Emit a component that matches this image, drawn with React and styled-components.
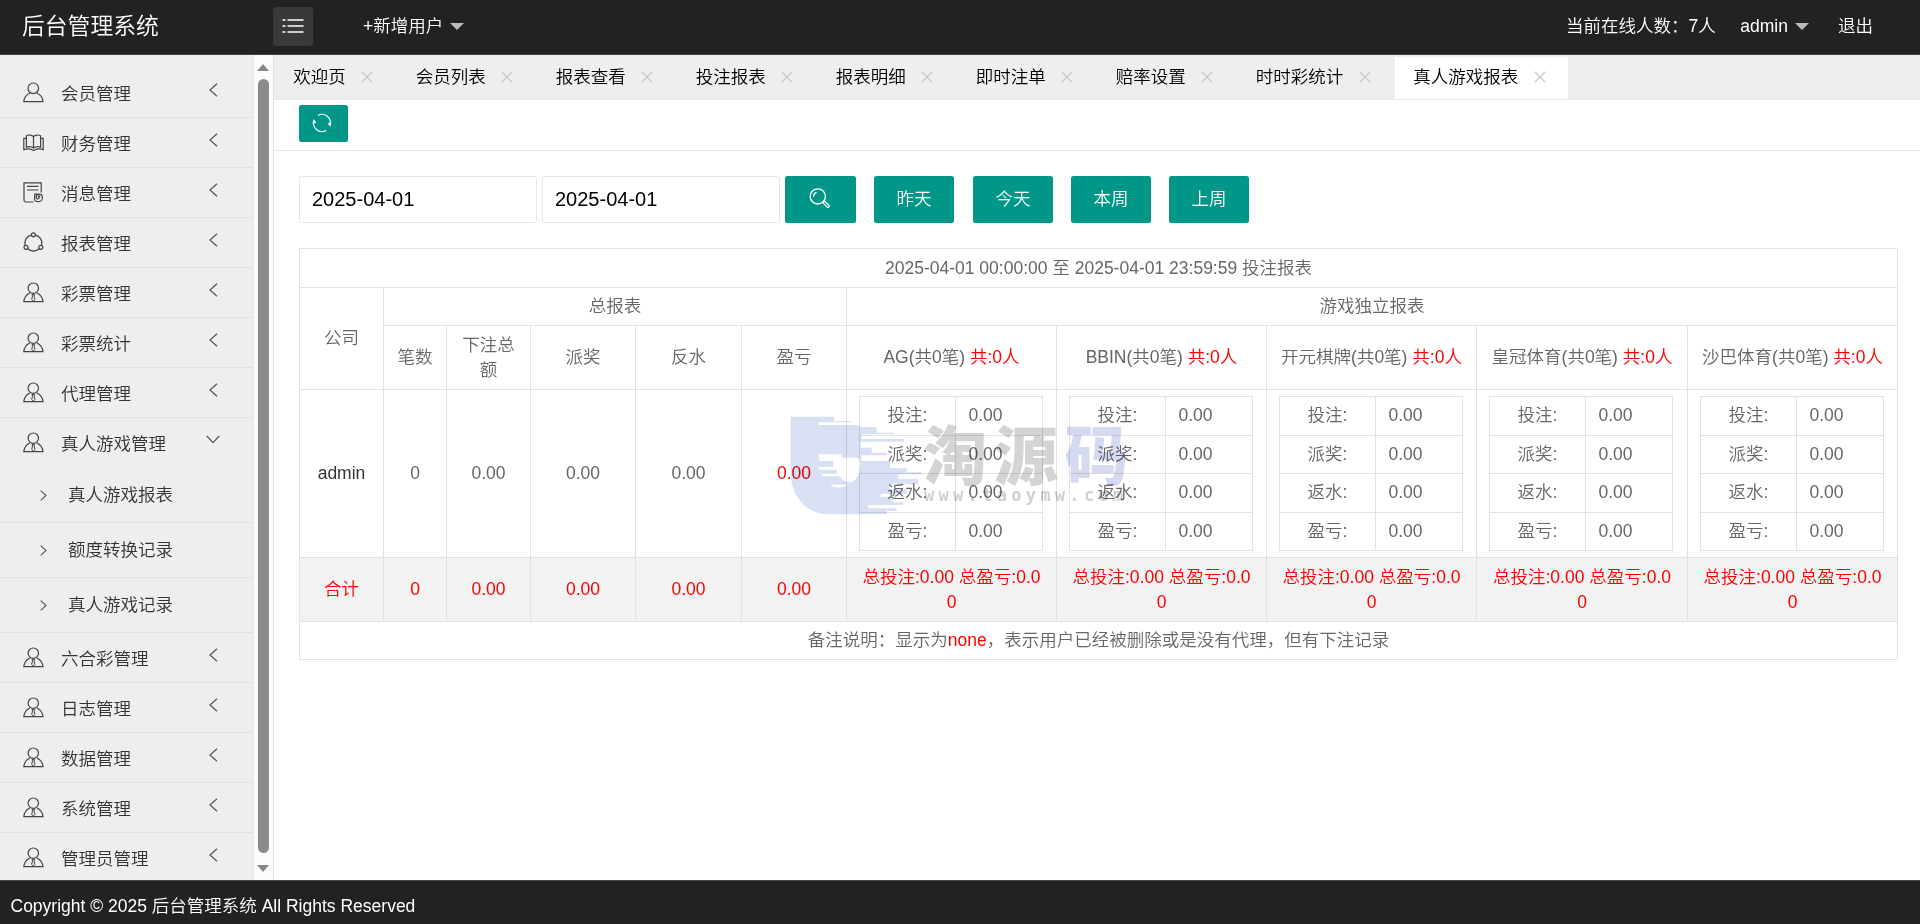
import styled, { createGlobalStyle, css } from "styled-components";

const GlobalStyle = createGlobalStyle`
  * {
    box-sizing: border-box;
  }

  body {
    margin: 0;
    overflow: hidden;
    background: #fff;
    color: #333;
    font: 17.5px/25px "Liberation Sans", "Noto Sans CJK SC", sans-serif;
    font-weight: 350;
  }

  ul {
    margin: 0;
    padding: 0;
    list-style: none;
  }
`;

const Page = styled.div`
  display: flex;
  flex-direction: column;
  width: 1920px;
  height: 924px;
`;

/* ---------- header ---------- */

const Header = styled.header`
  display: flex;
  align-items: center;
  flex: none;
  height: 55px;
  padding: 0 47px 2px 22px;
  border-bottom: 1px solid #444;
  background: #222;
  color: #fff;
`;

const Logo = styled.h1`
  width: 251px;
  margin: 0;
  font-size: 22.8px;
  font-weight: 350;
  line-height: 50px;
`;

const MenuToggle = styled.button`
  display: flex;
  align-items: center;
  justify-content: center;
  width: 40px;
  height: 39px;
  margin: 1px 50px 0 0;
  padding: 0 0 1px;
  border: 0;
  border-radius: 3px;
  background: #393939;
`;

const HeaderLink = styled.span`
  display: flex;
  align-items: center;
  gap: ${(p) => p.$gap || 7}px;
  margin-right: ${(p) => p.$right || 0}px;
  white-space: nowrap;
`;

const Caret = styled.i`
  border: 7px solid transparent;
  border-top-color: #bbb;
  border-bottom: 0;
`;

const Spacer = styled.div`
  flex: 1;
`;

/* ---------- sidebar ---------- */

const Body = styled.div`
  display: flex;
  flex: none;
  height: 825px;
`;

const Sidebar = styled.nav`
  width: 254px;
  height: 825px;
  padding-top: 13px;
  overflow: hidden;
  border-right: 1px solid #e5e5e5;
  background: #eee;
`;

const NavItem = styled.div`
  display: flex;
  align-items: center;
  height: 50px;
  padding: 0 35px 0 22.5px;
  border-bottom: 1px solid ${(p) => (p.$open ? "transparent" : "#e1e1e1")};

  svg {
    flex: none;
  }
`;

const NavText = styled.span`
  flex: 1;
  padding: 3px 0 0 17.5px;
`;

const ArrowBox = styled.span`
  display: flex;
  justify-content: center;
  width: 18px;
  margin: 0 -4px 6px 0;
`;

const SubItem = styled.li`
  display: flex;
  align-items: center;
  gap: 21px;
  height: 55px;
  padding: 0 0 0 40px;
  border-bottom: 1px solid #e1e1e1;
`;

const ScrollBar = styled.div`
  display: flex;
  flex-direction: column;
  align-items: center;
  width: 20px;
  padding: 9px 1px 8px 0;
  border-right: 1px solid #e2e2e2;
  background: #fcfcfc;
`;

const ScrollArrow = styled.i`
  border: 6.5px solid transparent;
  ${(p) =>
    p.$down
      ? css`
          border-top: 7px solid #888;
          border-bottom: 0;
        `
      : css`
          border-bottom: 7px solid #888;
          border-top: 0;
        `}
`;

const ScrollThumb = styled.div`
  flex: 1;
  width: 11px;
  margin: 8px 0 12px;
  border-radius: 6px;
  background: #8b8b8b;
`;

/* ---------- content ---------- */

const Content = styled.main`
  position: relative;
  flex: 1;
  min-width: 0;
`;

const TabBar = styled.ul`
  display: flex;
  height: 45px;
  padding: 2px 0 0 0.5px;
  border-bottom: 1px solid #e8e8ea;
  background: #eeeef0;
`;

const Tab = styled.li`
  display: flex;
  align-items: center;
  gap: 15.5px;
  height: 42px;
  padding: 0 ${(p) => (p.$active ? 22 : 23.75)}px 2px 18.75px;
  background: ${(p) => (p.$active ? "#fff" : "transparent")};
  color: #000;
  white-space: nowrap;
`;

const Toolbar = styled.div`
  height: 51px;
  padding: 5px 25px 0;
  border-bottom: 1px solid #e5e5e5;
`;

const Button = styled.button`
  display: flex;
  align-items: center;
  justify-content: center;
  width: ${(p) => p.$width}px;
  height: ${(p) => p.$height || 47}px;
  margin-left: ${(p) => p.$left || 0}px;
  padding: 0;
  border: 0;
  border-radius: 2.5px;
  background: #009688;
  color: #fff;
  font: inherit;

  svg {
    margin: 0 3px 2px 0;
  }
`;

const Filters = styled.div`
  display: flex;
  padding: 25px 25px 0;
`;

const DateInput = styled.input`
  width: 238px;
  height: 47px;
  margin-right: 5px;
  padding: 0 12px 1px;
  border: 1px solid #e6e6e6;
  border-radius: 2.5px;
  background: #fff;
  color: #000;
  font: inherit;
  font-size: 20px;
`;

const Table = styled.table`
  width: 1598px;
  margin: 25px 0 0 25px;
  border-collapse: collapse;
  table-layout: fixed;
  color: #666;
  text-align: center;
`;

const Row = styled.tr`
  height: ${(p) => p.$height}px;
  background: ${(p) => (p.$total ? "#f2f2f2" : "transparent")};
  color: ${(p) => (p.$total ? "#f00" : "inherit")};
`;

const Cell = styled.td`
  padding: 0 12.5px;
  border: 1px solid #e2e2e2;
  word-break: break-all;
`;

const HeadCell = styled(Cell)`
  padding: 0 ${(p) => (p.$tight ? 0 : 12.5)}px;
  white-space: ${(p) => (p.$tight ? "nowrap" : "normal")};
`;

const Red = styled.span`
  color: #f00;
`;

const Dark = styled.span`
  color: #333;
`;

const InnerTable = styled.table`
  width: 184px;
  margin-left: -0.5px;
  border-collapse: collapse;
  table-layout: fixed;

  td {
    padding: 0 12.5px 1px;
    border: 1px solid #e2e2e2;
    text-align: left;
  }

  td:first-child {
    width: 96px;
    text-align: center;
  }
`;

const Watermark = styled.div`
  position: absolute;
  left: 516px;
  top: 360px;
  display: flex;
  mix-blend-mode: multiply;
  pointer-events: none;
`;

const WatermarkWords = styled.div`
  padding: 5px 0 0 1px;
  color: #d0d0d0;
  white-space: nowrap;
`;

const WatermarkTitle = styled.div`
  color: #d4d4d4;
  font: 900 64px/62px "Noto Sans CJK SC", sans-serif;
  letter-spacing: 6.7px;

  span {
    color: #d5daf1;
  }
`;

const WatermarkUrl = styled.div`
  margin: 4px 0 0 1px;
  font: bold 17px/18px "DejaVu Sans Mono", monospace;
  letter-spacing: 4.3px;
`;

const Footer = styled.footer`
  flex: none;
  height: 44px;
  padding: 13px 10.5px 0;
  border-top: 1px solid #444;
  background: #222;
  color: #fff;
`;

/* ---------- icons ---------- */

function Icon({ size = 21, width = 1.2, color = "#444", children }) {
  return (
    <svg width={size} height={size} viewBox="0 0 21 21" fill="none" stroke={color} strokeWidth={width}>
      {children}
    </svg>
  );
}

function NavIcon({ type }) {
  switch (type) {
    case "user":
      return (
        <Icon>
          <circle cx="10.3" cy="6.3" r="5.3" />
          <path d="M7.2 11C3.8 12.3 1.2 15.3.8 19.7h19.2c-.4-4.4-3-7.4-6.4-8.7" />
        </Icon>
      );
    case "book":
      return (
        <Icon>
          <path d="M10.5 4.6C9 2.8 5.7 2.5 3.4 3.8v11.4c2.6-.8 5.4-.7 7.1 1 1.7-1.7 4.5-1.8 7.1-1V3.8c-2.3-1.3-5.6-1-7.1.8v11.6" />
          <path d="M3.4 6.4H.8v11.2c3-.8 6-.8 8 0 .9 1 2.5 1 3.4 0 2-.8 5-.8 8 0V6.4h-2.6" />
        </Icon>
      );
    case "form":
      return (
        <Icon>
          <path d="M10.5 20H3A2 2 0 0 1 1 18V.9h17.2v9.5M4 4.4h11.5M4 8h11.5" />
          <path d="M11.4 12.2h4M11.6 12.5v4c0 1.8 1.2 3.2 3.4 3.2s4.4-1.4 4.4-3.8-1.6-3.8-3.4-3.8c-2 0-2.7 1.3-2.7 2.6s.8 2.4 2 2.4M15 14.5h2.3M16 13v4" />
        </Icon>
      );
    case "share":
      return (
        <Icon>
          <circle cx="10.4" cy="2.8" r="2" />
          <circle cx="3" cy="15.3" r="2" />
          <circle cx="17.8" cy="15.3" r="2" />
          <path d="M8.4 3.2A8 8 0 0 0 2.2 13.3M12.4 3.2a8 8 0 0 1 6.2 10.1M4.6 16.8a8.4 8.4 0 0 0 11.6 0" />
        </Icon>
      );
    default:
      return (
        <Icon>
          <circle cx="10.3" cy="6.2" r="5.2" />
          <path d="M6.8 11C3.4 12.6 1.2 15.5.8 19.7h19.2c-.4-4.2-2.6-7.1-6-8.7" />
          <path d="M9 12.6h2.6l-.5 1.5.8 3.4-1.6 1.6-1.6-1.6.8-3.4z" strokeWidth="1" />
        </Icon>
      );
  }
}

const Chevron = ({ open }) =>
  open ? (
    <svg width="14" height="9" viewBox="0 0 14 9" fill="none" stroke="#555" strokeWidth="1.2">
      <path d="M.8 1 7 7.6 13.2 1" />
    </svg>
  ) : (
    <svg width="9" height="14" viewBox="0 0 9 14" fill="none" stroke="#555" strokeWidth="1.2">
      <path d="M8 .7 1 7l7 6.3" />
    </svg>
  );

const Close = () => (
  <svg width="12" height="12" viewBox="0 0 12 12" stroke="#c9c9c9" strokeWidth="1.3">
    <path d="M.8.8l10.4 10.4M11.2.8.8 11.2" />
  </svg>
);

/* ---------- data ---------- */

const menu = [
  { text: "会员管理", icon: "user" },
  { text: "财务管理", icon: "book" },
  { text: "消息管理", icon: "form" },
  { text: "报表管理", icon: "share" },
  { text: "彩票管理" },
  { text: "彩票统计" },
  { text: "代理管理" },
  { text: "真人游戏管理", children: ["真人游戏报表", "额度转换记录", "真人游戏记录"] },
  { text: "六合彩管理" },
  { text: "日志管理" },
  { text: "数据管理" },
  { text: "系统管理" },
  { text: "管理员管理" },
];

const tabs = [
  "欢迎页",
  "会员列表",
  "报表查看",
  "投注报表",
  "报表明细",
  "即时注单",
  "赔率设置",
  "时时彩统计",
  "真人游戏报表",
];

const columns = [84, 63, 84, 105, 106, 105, 210, 210, 210, 211, 210];
const totals = ["笔数", "下注总额", "派奖", "反水", "盈亏"];
const games = ["AG", "BBIN", "开元棋牌", "皇冠体育", "沙巴体育"];
const lines = ["投注:", "派奖:", "返水:", "盈亏:"];

function SideMenu() {
  return (
    <Sidebar>
      <ul>
        {menu.map((m) => (
          <li key={m.text}>
            <NavItem $open={!!m.children}>
              <NavIcon type={m.icon} />
              <NavText>{m.text}</NavText>
              <ArrowBox>
                <Chevron open={!!m.children} />
              </ArrowBox>
            </NavItem>
            {m.children && (
              <ul>
                {m.children.map((c) => (
                  <SubItem key={c}>
                    <svg width="7" height="11" viewBox="0 0 7 11" fill="none" stroke="#555" strokeWidth="1.1">
                      <path d="M.7.7 6 5.5.7 10.3" />
                    </svg>
                    {c}
                  </SubItem>
                ))}
              </ul>
            )}
          </li>
        ))}
      </ul>
    </Sidebar>
  );
}

function Report() {
  return (
    <Table>
      <colgroup>
        {columns.map((w, i) => (
          <col key={i} style={{ width: w }} />
        ))}
      </colgroup>
      <tbody>
        <Row $height={39}>
          <Cell colSpan={11}>2025-04-01 00:00:00 至 2025-04-01 23:59:59 投注报表</Cell>
        </Row>
        <Row $height={38}>
          <Cell rowSpan={2}>公司</Cell>
          <Cell colSpan={5}>总报表</Cell>
          <Cell colSpan={5}>游戏独立报表</Cell>
        </Row>
        <Row $height={64}>
          {totals.map((t) => (
            <HeadCell key={t}>{t}</HeadCell>
          ))}
          {games.map((g) => (
            <HeadCell key={g} $tight>
              {g}(共0笔) <Red>共:0人</Red>
            </HeadCell>
          ))}
        </Row>
        <Row $height={168}>
          <Cell>
            <Dark>admin</Dark>
          </Cell>
          <Cell>0</Cell>
          <Cell>0.00</Cell>
          <Cell>0.00</Cell>
          <Cell>0.00</Cell>
          <Cell>
            <Red>0.00</Red>
          </Cell>
          {games.map((g) => (
            <Cell key={g}>
              <InnerTable>
                <tbody>
                  {lines.map((l, i) => (
                    <Row key={l} $height={i % 2 ? 38 : 39}>
                      <td>{l}</td>
                      <td>0.00</td>
                    </Row>
                  ))}
                </tbody>
              </InnerTable>
            </Cell>
          ))}
        </Row>
        <Row $height={64} $total>
          <Cell>合计</Cell>
          <Cell>0</Cell>
          <Cell>0.00</Cell>
          <Cell>0.00</Cell>
          <Cell>0.00</Cell>
          <Cell>0.00</Cell>
          {games.map((g) => (
            <Cell key={g}>总投注:0.00 总盈亏:0.00</Cell>
          ))}
        </Row>
        <Row $height={38}>
          <Cell colSpan={11}>
            备注说明：显示为<Red>none</Red>，表示用户已经被删除或是没有代理，但有下注记录
          </Cell>
        </Row>
      </tbody>
    </Table>
  );
}

export default function App() {
  return (
    <Page>
      <GlobalStyle />
      <Header>
        <Logo>后台管理系统</Logo>
        <MenuToggle>
          <svg width="22" height="14" viewBox="0 0 22 14" stroke="#fff" strokeWidth="1.5">
            <path d="M.5 1h3M5.5 1h16M.5 7h3M5.5 7h16M.5 13h3M5.5 13h16" />
          </svg>
        </MenuToggle>
        <HeaderLink>
          +新增用户
          <Caret />
        </HeaderLink>
        <Spacer />
        <HeaderLink $right={24.5}>当前在线人数：7人</HeaderLink>
        <HeaderLink $right={29} $gap={7}>
          admin
          <Caret />
        </HeaderLink>
        <HeaderLink>退出</HeaderLink>
      </Header>

      <Body>
        <SideMenu />
        <ScrollBar>
          <ScrollArrow />
          <ScrollThumb />
          <ScrollArrow $down />
        </ScrollBar>

        <Content>
          <TabBar>
            {tabs.map((t, i) => (
              <Tab key={t} $active={i === tabs.length - 1}>
                {t}
                <Close />
              </Tab>
            ))}
          </TabBar>
          <Toolbar>
            <Button $width={49} $height={37}>
              <Icon size={20} color="#fff" width={1.2}>
                <path d="M6.2 2.6A8.7 8.7 0 0 1 19.2 11M14.8 18.4A8.7 8.7 0 0 1 1.8 10" />
                <path d="M.8 10.8 1.8 6.8l2.6 3.2zM20.2 10.2 19.2 14.2l-2.6-3.2z" fill="#fff" strokeWidth=".4" />
              </Icon>
            </Button>
          </Toolbar>
          <Filters>
            <DateInput defaultValue="2025-04-01" />
            <DateInput defaultValue="2025-04-01" />
            <Button $width={71}>
              <Icon size={21} color="#fff" width={1.3}>
                <circle cx="8.8" cy="8.4" r="7.6" />
                <path d="M4.6 8.6a4.4 4.4 0 0 1 3-4.2M13.8 14.6l1.7-1.5 4.4 4.3c.9 1-.7 2.6-1.7 1.7z" />
              </Icon>
            </Button>
            <Button $width={80} $left={18}>昨天</Button>
            <Button $width={80} $left={19}>今天</Button>
            <Button $width={80} $left={18}>本周</Button>
            <Button $width={80} $left={18}>上周</Button>
          </Filters>
          <Report />

          <Watermark>
            <svg width="132" height="104" viewBox="0 0 396 312" fill="#d9e0f4">
              <path d="M2 5h130v13h52v4H86v8h122v6h52v17h52v5h-98v14h128v8H212v18h33v15h45v8h-76v17h86v22h50v12h45v6h-70v14h60v16h-85v14h50v14h-78v10h38v16h30v8H235v10h85v8h-30v10H120C55 300 2 250 2 170z" />
              <path
                d="M84 118h71v10h45c14 0 12 18 10 32-5 45-40 55-60 24h-50l-8-8h48v-12H92l-8-8h46v-18H90zM120 209h54c-14 10-40 12-54 0z"
                fill="#fff"
              />
            </svg>
            <WatermarkWords>
              <WatermarkTitle>
                淘源<span>码</span>
              </WatermarkTitle>
              <WatermarkUrl>www.taoymw.com</WatermarkUrl>
            </WatermarkWords>
          </Watermark>
        </Content>
      </Body>

      <Footer>Copyright © 2025 后台管理系统 All Rights Reserved</Footer>
    </Page>
  );
}
